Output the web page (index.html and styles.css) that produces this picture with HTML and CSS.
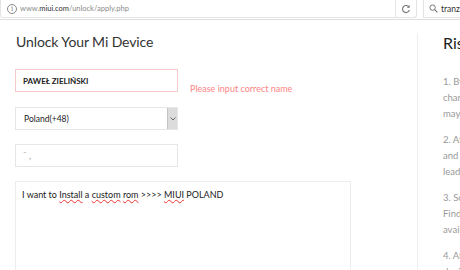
FILE: index.html
```html
<!DOCTYPE html>
<html>
<head>
    <title>Unlock Your Mi Device</title>
    <link rel="stylesheet" href="styles.css">
</head>
<body>
    <div class="browser-bar">
        <div class="address">
            <span class="info-icon">i</span>
            <span class="url">www.<b>miui.com</b>/unlock/apply.php</span>
            <span class="reload">
                <svg width="10" height="10" viewBox="0 0 10 10">
                    <path d="M8 3.2A3.5 3.5 0 1 0 8.4 6" fill="none" stroke="#777" stroke-width="1.1"/>
                    <path d="M8.6 1v2.8H5.8z" fill="#777"/>
                </svg>
            </span>
        </div>
        <div class="search">
            <svg class="search-icon" width="9" height="9" viewBox="0 0 9 9">
                <circle cx="3.6" cy="3.6" r="2.7" fill="none" stroke="#777" stroke-width="1"/>
                <path d="M5.6 5.6L8.4 8.4" stroke="#777" stroke-width="1.2"/>
            </svg>
            <span>tranzlate</span>
        </div>
    </div>

    <div class="page">
        <div class="main">
            <h1>Unlock Your Mi Device</h1>

            <div class="row row-name">
                <div class="field field-error">PAWEŁ ZIELIŃSKI</div>
                <span class="error-msg">Please input correct name</span>
            </div>

            <div class="row">
                <div class="field select">
                    <span>Poland(+48)</span>
                    <span class="select-arrow">
                        <svg width="6" height="4" viewBox="0 0 6 4">
                            <path d="M0.5 0.5L3 3L5.5 0.5" fill="none" stroke="#666" stroke-width="1"/>
                        </svg>
                    </span>
                </div>
            </div>

            <div class="row">
                <div class="field phone">˜ ,</div>
            </div>

            <div class="reason">
                I want to <span class="typo">Install</span> a <span class="typo">custom</span> <span class="typo">rom</span> &gt;&gt;&gt;&gt; <span class="typo">MIUI</span> POLAND
            </div>
        </div>

        <div class="side">
            <h2>Risks</h2>
            <p>1. By unlocking your device,<br>changes to the system<br>may affect its security.</p>
            <p>2. After unlocking, data<br>and settings may be lost<br>leading to problems.</p>
            <p>3. Some features may not work.<br>Find out which ones are<br>available here.</p>
            <p>4. After unlocking, the<br>device may change.</p>
        </div>
    </div>
</body>
</html>
```

FILE: styles.css
```css
body {
    margin: 0;
    font-family: Lato, "Open Sans", Arial, sans-serif;
    background-color: #fff;
    color: #333;
    overflow: hidden;
}

.browser-bar {
    display: flex;
    height: 19px;
    border-bottom: 1px solid #dedede;
    background-color: #fff;
}

.address {
    display: flex;
    align-items: center;
    width: 417px;
    height: 18px;
    flex-shrink: 0;
    border: 1px solid #e4e4e4;
    border-top: none;
    border-radius: 0 0 3px 3px;
    box-sizing: border-box;
}

.info-icon {
    width: 8px;
    height: 8px;
    margin-left: 6px;
    border: 1px solid #888;
    border-radius: 50%;
    font-size: 7px;
    line-height: 8px;
    text-align: center;
    color: #777;
    font-family: "DejaVu Serif", serif;
}

.url {
    margin-left: 3px;
    font-size: 7.5px;
    color: #8a8a8a;
    flex: 1;
}

.url b {
    font-weight: normal;
    color: #333;
}

.reload {
    display: flex;
    align-items: center;
    height: 100%;
    padding: 0 5px 0 5px;
    border-left: 1px solid #e6e6e6;
}

.search {
    display: flex;
    align-items: center;
    gap: 3px;
    margin-left: 6px;
    flex: 1;
    min-width: 0;
    height: 18px;
    padding-left: 5px;
    border: 1px solid #e4e4e4;
    border-top: none;
    border-right: none;
    box-sizing: border-box;
    font-size: 8.5px;
    color: #333;
    white-space: nowrap;
    overflow: hidden;
}

.search-icon {
    flex-shrink: 0;
}

.page {
    display: flex;
}

.main {
    width: 402px;
    flex-shrink: 0;
    padding: 0 0 0 15px;
    margin-top: 13px;
    border-right: 1px solid #eee;
}

h1 {
    margin: 0 0 17px 1px;
    font-size: 14px;
    font-weight: normal;
    letter-spacing: -0.1px;
    color: #333;
}

.row {
    display: flex;
    align-items: center;
    margin-bottom: 14px;
}

.row-name {
    margin-top: 1px;
    margin-bottom: 13px;
}

.field {
    width: 163px;
    height: 23px;
    box-sizing: border-box;
    border: 1px solid #e6e6e6;
    padding-left: 7px;
    display: flex;
    align-items: center;
    font-size: 8px;
    color: #222;
}

.field-error {
    border-color: #f6caca;
    font-weight: bold;
}

.error-msg {
    margin-left: 12px;
    margin-top: 16px;
    font-size: 9px;
    color: #fb8585;
}

.select {
    padding-left: 8px;
    justify-content: space-between;
    font-size: 8.5px;
}

.select-arrow {
    display: flex;
    align-items: center;
    justify-content: center;
    width: 9px;
    height: 21px;
    background-color: #dcdcdc;
    border-left: 1px solid #c4c4c4;
}

.phone {
    color: #999;
    font-size: 9px;
}

.reason {
    width: 336px;
    height: 100px;
    box-sizing: border-box;
    border: 1px solid #ececec;
    border-bottom: none;
    padding: 7px 6px;
    font-size: 9px;
    color: #222;
}

.typo {
    text-decoration: underline wavy #e33;
    text-decoration-thickness: 1px;
}

.side {
    flex-shrink: 0;
    width: 180px;
    padding-left: 25px;
    margin-top: 13px;
}

h2 {
    margin: 0 0 22px 0;
    font-size: 16px;
    font-weight: normal;
    color: #222;
}

.side p {
    margin: 0 0 10px 0;
    white-space: nowrap;
    font-size: 9.5px;
    line-height: 16px;
    color: #999;
}
```
